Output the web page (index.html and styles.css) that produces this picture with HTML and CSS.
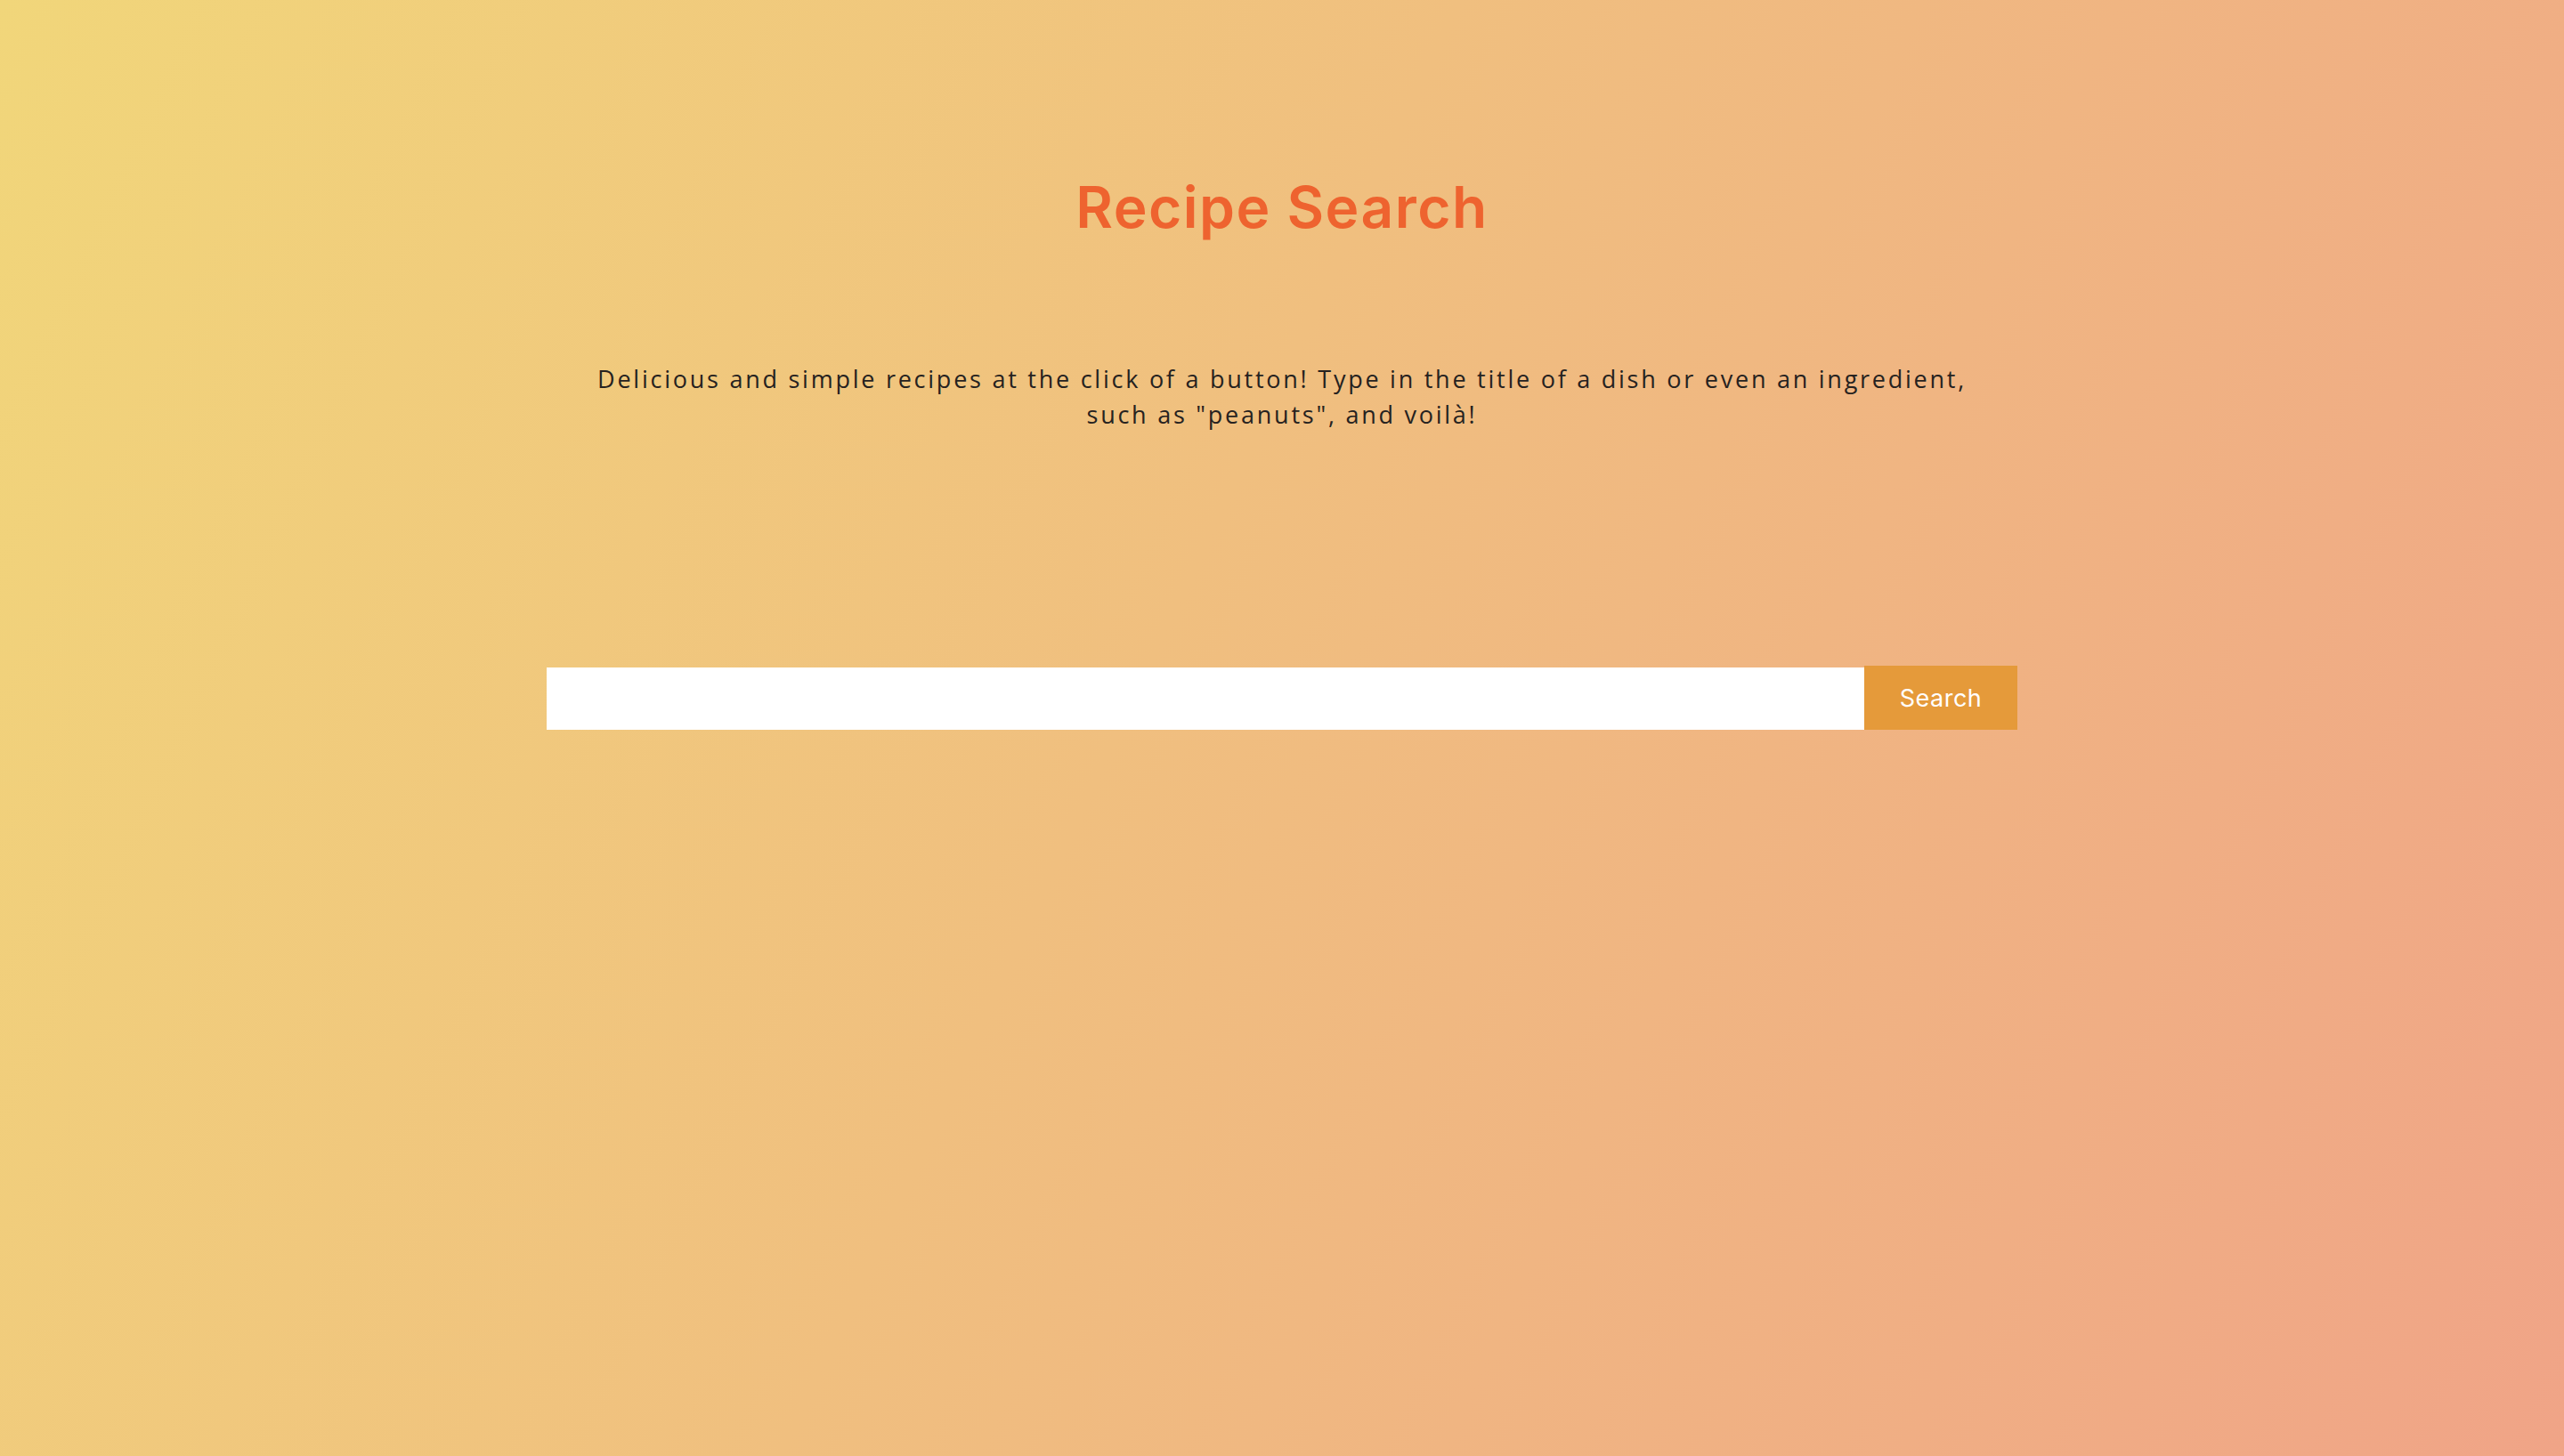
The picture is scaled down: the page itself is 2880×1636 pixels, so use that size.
FILE: index.html
```html
<!DOCTYPE html>
<html lang="en">
<head>
<meta charset="utf-8">
<title>Recipe Search</title>
<link rel="stylesheet" href="styles.css">
</head>
<body>
<main class="page">
  <h1 class="title">Recipe Search</h1>
  <p class="intro">Delicious and simple recipes at the click of a button! Type in the title of a dish or even an ingredient, such as "peanuts", and voilà!</p>
  <form class="search">
    <input class="search-input" type="text">
    <button class="search-btn" type="button">Search</button>
  </form>
</main>
</body>
</html>
```

FILE: styles.css
```css
html, body {
  margin: 0;
  padding: 0;
}
body {
  min-height: 100vh;
  background: linear-gradient(115deg, #f1d67a 0%, #f0bf7f 45%, #f0a487 100%);
  font-family: "Open Sans", "Noto Sans", sans-serif;
}
.page {
  display: flex;
  flex-direction: column;
  align-items: center;
  padding-top: 188px;
}
.title {
  margin: 0;
  font-family: Inter, "Open Sans", sans-serif;
  font-weight: 600;
  font-size: 64px;
  line-height: 90px;
  color: #ee632f;
  letter-spacing: 1.5px;
}
.intro {
  margin: 128px 0 0;
  width: 1570px;
  text-align: center;
  font-size: 27px;
  line-height: 40px;
  letter-spacing: 2.75px;
  color: #262220;
}
.search {
  margin-top: 262px;
  display: flex;
  align-items: flex-end;
}
.search-input {
  width: 1480px;
  height: 70px;
  box-sizing: border-box;
  border: none;
  background: #fff;
  margin: 0;
  padding: 0 16px;
  outline: none;
}
.search-btn {
  width: 172px;
  height: 72px;
  border: none;
  margin: 0;
  background: #e59a3a;
  color: #fff;
  font-family: Inter, "Open Sans", sans-serif;
  font-weight: 400;
  font-size: 27px;
  letter-spacing: 0.5px;
  cursor: pointer;
}
```
